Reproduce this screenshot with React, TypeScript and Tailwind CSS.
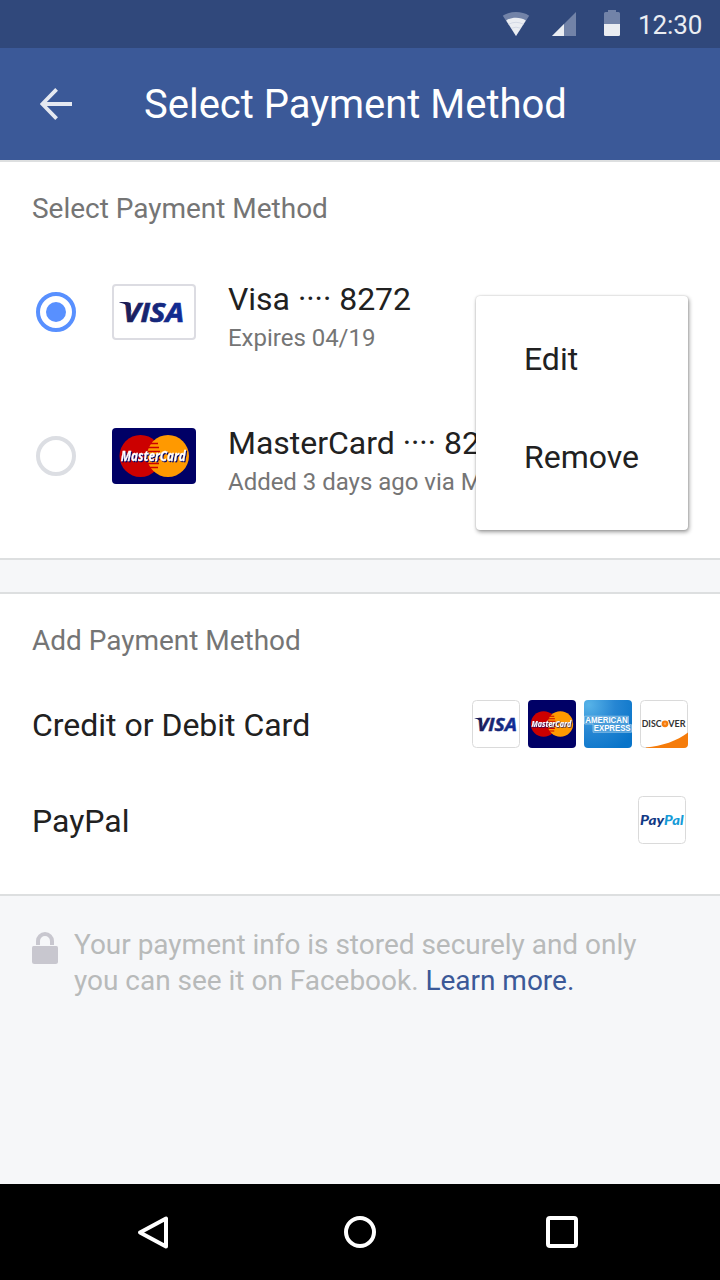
import type { ReactNode } from 'react';

function VisaWord({ id }: { id: string }) {
  return (
    <>
      <defs>
        <linearGradient id={id} x1="0" y1="0" x2="1" y2="0">
          <stop offset="0" stopColor="#1c1c55" />
          <stop offset="0.6" stopColor="#15297f" />
          <stop offset="1" stopColor="#0f2c9b" />
        </linearGradient>
      </defs>
      <text x="11" y="38" fontFamily="'Open Sans', sans-serif" fontStyle="italic" fontWeight="700" fontSize="27.500" textLength="61" lengthAdjust="spacingAndGlyphs" fill={`url(#${id})`} stroke={`url(#${id})`} strokeWidth=".7">VISA</text>
      <path d="M7.4 18H14.5C17 18 18 19 18.3 21L19.5 28C17 22 12.5 19.5 7.4 18.5Z" fill="#1c1c55" />
    </>
  );
}

function MasterCardArt() {
  return (
    <>
      <circle cx="28.500" cy="28" r="21" fill="#cc0000" />
      <circle cx="56" cy="28" r="21" fill="#ff9900" />
      <path d="M38 15.500h8M36 19.500h11M36 23.500h12M36 31.500h12M36 35.500h11M38 39.500h8" stroke="#cc0000" strokeWidth="1.700" />
      <text className="drop-shadow-[1px_1px_0_#000066]" x="8.800" y="33.200" fontFamily="'Open Sans', sans-serif" fontStyle="italic" fontWeight="700" fontSize="14" textLength="65" lengthAdjust="spacingAndGlyphs" fill="#fff" stroke="#fff" strokeWidth="0.300">MasterCard</text>
    </>
  );
}

function Radio({ checked = false }: { checked?: boolean }) {
  return (
    <span className={`flex size-10 shrink-0 items-center justify-center rounded-full border-4 ${checked ? 'border-[#5890ff]' : 'border-[#dcdee3]'}`}>
      {checked && <span className="size-5 rounded-full bg-[#5890ff]" />}
    </span>
  );
}

function Method({ checked, logo, title, detail }: { checked?: boolean; logo: ReactNode; title: string; detail: string }) {
  return (
    <div className="flex h-36 items-center overflow-hidden pl-9 whitespace-nowrap">
      <Radio checked={checked} />
      <div className="ml-9 shrink-0">{logo}</div>
      <div className="ml-8 flex flex-col gap-[3px] pt-[9px]">
        <span className="text-[32px] leading-10 text-[#212121]">{title}</span>
        <span className="text-2xl leading-8 text-[#757575]">{detail}</span>
      </div>
    </div>
  );
}

function StatusBar() {
  return (
    <header className="flex h-12 items-center bg-[#30487b] pl-[502px] text-[#eaedf2]">
      <svg className="size-7" viewBox="0 0 28 28">
        <path d="M14 26L.8 5.800C8 .8 20 .8 27.200 5.800Z" fill="#7283a8" />
        <path d="M14 26L4.200 10.500C9 6.800 19 6.800 23.800 10.500Z" fill="#eaedf2" />
        <path d="M6.500 14.300Q14 10.300 21.500 14.300M9 18.300Q14 16 19 18.300" fill="none" stroke="#c9d0df" strokeWidth=".7" />
      </svg>
      <svg className="ml-[22px] h-6 w-6" viewBox="0 0 24 24">
        <path d="M24 0V24H0Z" fill="#7283a8" />
        <path d="M12 12V24H0Z" fill="#eaedf2" />
      </svg>
      <svg className="mb-0.5 ml-7 h-[26px] w-4" viewBox="0 0 16 26">
        <path d="M4 0h8v2h2.500Q16 2 16 3.500V14H0V3.500Q0 2 1.500 2H4Z" fill="#7283a8" />
        <path d="M0 14H16V24.500Q16 26 14.500 26H1.500Q0 26 0 24.500Z" fill="#eaedf2" />
      </svg>
      <span className="ml-[18px] pt-0.5 text-[26px] leading-8 tracking-[-0.1px]">12:30</span>
    </header>
  );
}

function SmallCards() {
  return (
    <div className="flex gap-2">
      <svg className="size-12" viewBox="0 0 48 48">
        <rect x=".5" y=".5" width="47" height="47" rx="4" fill="#fff" stroke="#dadada" />
        <g transform="translate(-2.300 6.200) scale(.655)"><VisaWord id="visa-small" /></g>
      </svg>
      <svg className="size-12" viewBox="0 0 48 48">
        <rect width="48" height="48" rx="4" fill="#000066" />
        <g transform="translate(-1.800 6.900) scale(.61)"><MasterCardArt /></g>
      </svg>
      <svg className="size-12" viewBox="0 0 48 48">
        <defs>
          <radialGradient id="amex" cx=".1" cy=".1" r="1.100">
            <stop offset="0" stopColor="#57b3e8" />
            <stop offset=".5" stopColor="#2686d3" />
            <stop offset="1" stopColor="#0874c9" />
          </radialGradient>
        </defs>
        <rect width="48" height="48" rx="4" fill="url(#amex)" />
        <path d="M.5 16.200H44.500V24.600H47.500V32.300H9V24H.5Z" fill="#4a9cda" stroke="#b5d8f0" strokeWidth=".6" />
        <g fontFamily="'Liberation Sans', sans-serif" fontWeight="700" fontSize="8.800" fill="#fff">
          <text x="1.200" y="23.200" textLength="42.500" lengthAdjust="spacingAndGlyphs">AMERICAN</text>
          <text x="9.800" y="31.400" textLength="36.700" lengthAdjust="spacingAndGlyphs">EXPRESS</text>
        </g>
      </svg>
      <svg className="size-12" viewBox="0 0 48 48">
        <rect x=".5" y=".5" width="47" height="47" rx="4" fill="#fff" stroke="#dadada" />
        <path d="M6 47.500C22 46 37 41 48 32.500V44Q48 48 44 48H6Z" fill="#f57c0b" />
        <g fontFamily="'Lato', sans-serif" fontWeight="700" fontSize="9" fill="#333">
          <text x="1.700" y="27" textLength="19.800" lengthAdjust="spacingAndGlyphs">DISC</text>
          <text x="28.300" y="27" textLength="17.200" lengthAdjust="spacingAndGlyphs">VER</text>
        </g>
        <circle cx="25" cy="23.800" r="3.400" fill="#f57c0b" />
        <circle cx="25" cy="23.800" r="1.200" fill="#f9a55b" />
      </svg>
    </div>
  );
}

export default function App() {
  return (
    <div className="relative flex h-[1280px] w-[720px] flex-col overflow-hidden bg-[#f6f7f9] font-['Roboto',sans-serif] tracking-[-0.02px]">
      <StatusBar />
      <div className="flex h-28 items-center bg-[#3b5998] pl-10">
        <svg className="size-8" viewBox="0 0 32 32" fill="none" stroke="#e5e9f1" strokeWidth="3.800">
          <path d="M32 16H3M16.600 1.400L2.300 16L16.600 30.600" />
        </svg>
        <h1 className="ml-[72px] pt-0.5 text-[40px] leading-[48px] text-white">Select Payment Method</h1>
      </div>

      <section className="h-[400px] border-y-2 border-[#dddfe0] bg-white">
        <h2 className="h-[78px] pt-[29px] pl-8 text-[28px] leading-9 text-[#757575]">Select Payment Method</h2>
        <Method
          checked
          title="Visa ···· 8272"
          detail="Expires 04/19"
          logo={
            <svg className="h-14 w-21" viewBox="0 0 84 56">
              <rect x="1" y="1" width="82" height="54" rx="3" fill="#fff" stroke="#dcdce2" strokeWidth="2" />
              <VisaWord id="visa-large" />
            </svg>
          }
        />
        <Method
          title="MasterCard ···· 8272"
          detail="Added 3 days ago via Messenger"
          logo={
            <svg className="h-14 w-21" viewBox="0 0 84 56">
              <rect width="84" height="56" rx="4" fill="#000066" />
              <MasterCardArt />
            </svg>
          }
        />
      </section>

      <section className="mt-8 h-[304px] border-y-2 border-[#dddfe0] bg-white px-8">
        <h2 className="h-[82px] pt-[29px] text-[28px] leading-9 text-[#757575]">Add Payment Method</h2>
        <div className="flex h-24 items-center justify-between text-[32px] text-[#212121]">
          <span className="pt-0.5">Credit or Debit Card</span>
          <SmallCards />
        </div>
        <div className="flex h-24 items-center justify-between text-[32px] text-[#212121]">
          <span className="pt-0.5">PayPal</span>
          <svg className="mr-0.5 size-12" viewBox="0 0 48 48">
            <rect x=".5" y=".5" width="47" height="47" rx="4" fill="#fff" stroke="#dadada" />
            <g fontFamily="'Lato', sans-serif" fontStyle="italic" fontWeight="900" fontSize="13">
              <text x="2" y="28.500" textLength="24" lengthAdjust="spacingAndGlyphs" fill="#113984">Pay</text>
              <text x="26" y="28.500" textLength="19.500" lengthAdjust="spacingAndGlyphs" fill="#159bd7">Pal</text>
            </g>
          </svg>
        </div>
      </section>

      <footer className="flex flex-1 pt-[31px] pl-8">
        <svg className="mt-[5px] h-8 w-[26px]" viewBox="0 0 26 32">
          <path d="M6 13V9a7 7 0 0 1 14 0v4" fill="none" stroke="#c8c7cf" strokeWidth="4" />
          <path d="M1.500 14H24.500Q26 14 26 15.500V29.500Q26 32 23.500 32H2.500Q0 32 0 29.500V15.500Q0 14 1.500 14Z" fill="#c8c7cf" />
        </svg>
        <p className="ml-4 text-[28px] leading-9 text-[#b8baba]">
          Your payment info is stored securely and only<br />
          you can see it on Facebook. <a className="text-[#3b5998]">Learn more.</a>
        </p>
      </footer>

      <nav className="flex h-24 items-center bg-black pl-[136px]">
        <svg className="h-9 w-9" viewBox="0 0 36 36" fill="none" stroke="#fff" strokeWidth="4" strokeLinejoin="round">
          <path d="M30 4.500V32.500L4 18.500Z" />
        </svg>
        <span className="ml-[172px] size-8 rounded-full border-4 border-white" />
        <span className="ml-[170px] size-8 rounded-[4px] border-4 border-white" />
      </nav>

      <div className="absolute top-[296px] left-[476px] flex h-[234px] w-[212px] flex-col rounded-[4px] bg-white pt-[14px] pl-12 text-[32px] text-[#212121] shadow-[1px_2px_4px_rgba(0,0,0,0.4),0_0_2px_rgba(0,0,0,0.2)]">
        <span className="flex h-[98px] items-center">Edit</span>
        <span className="flex h-[98px] items-center">Remove</span>
      </div>
    </div>
  );
}
